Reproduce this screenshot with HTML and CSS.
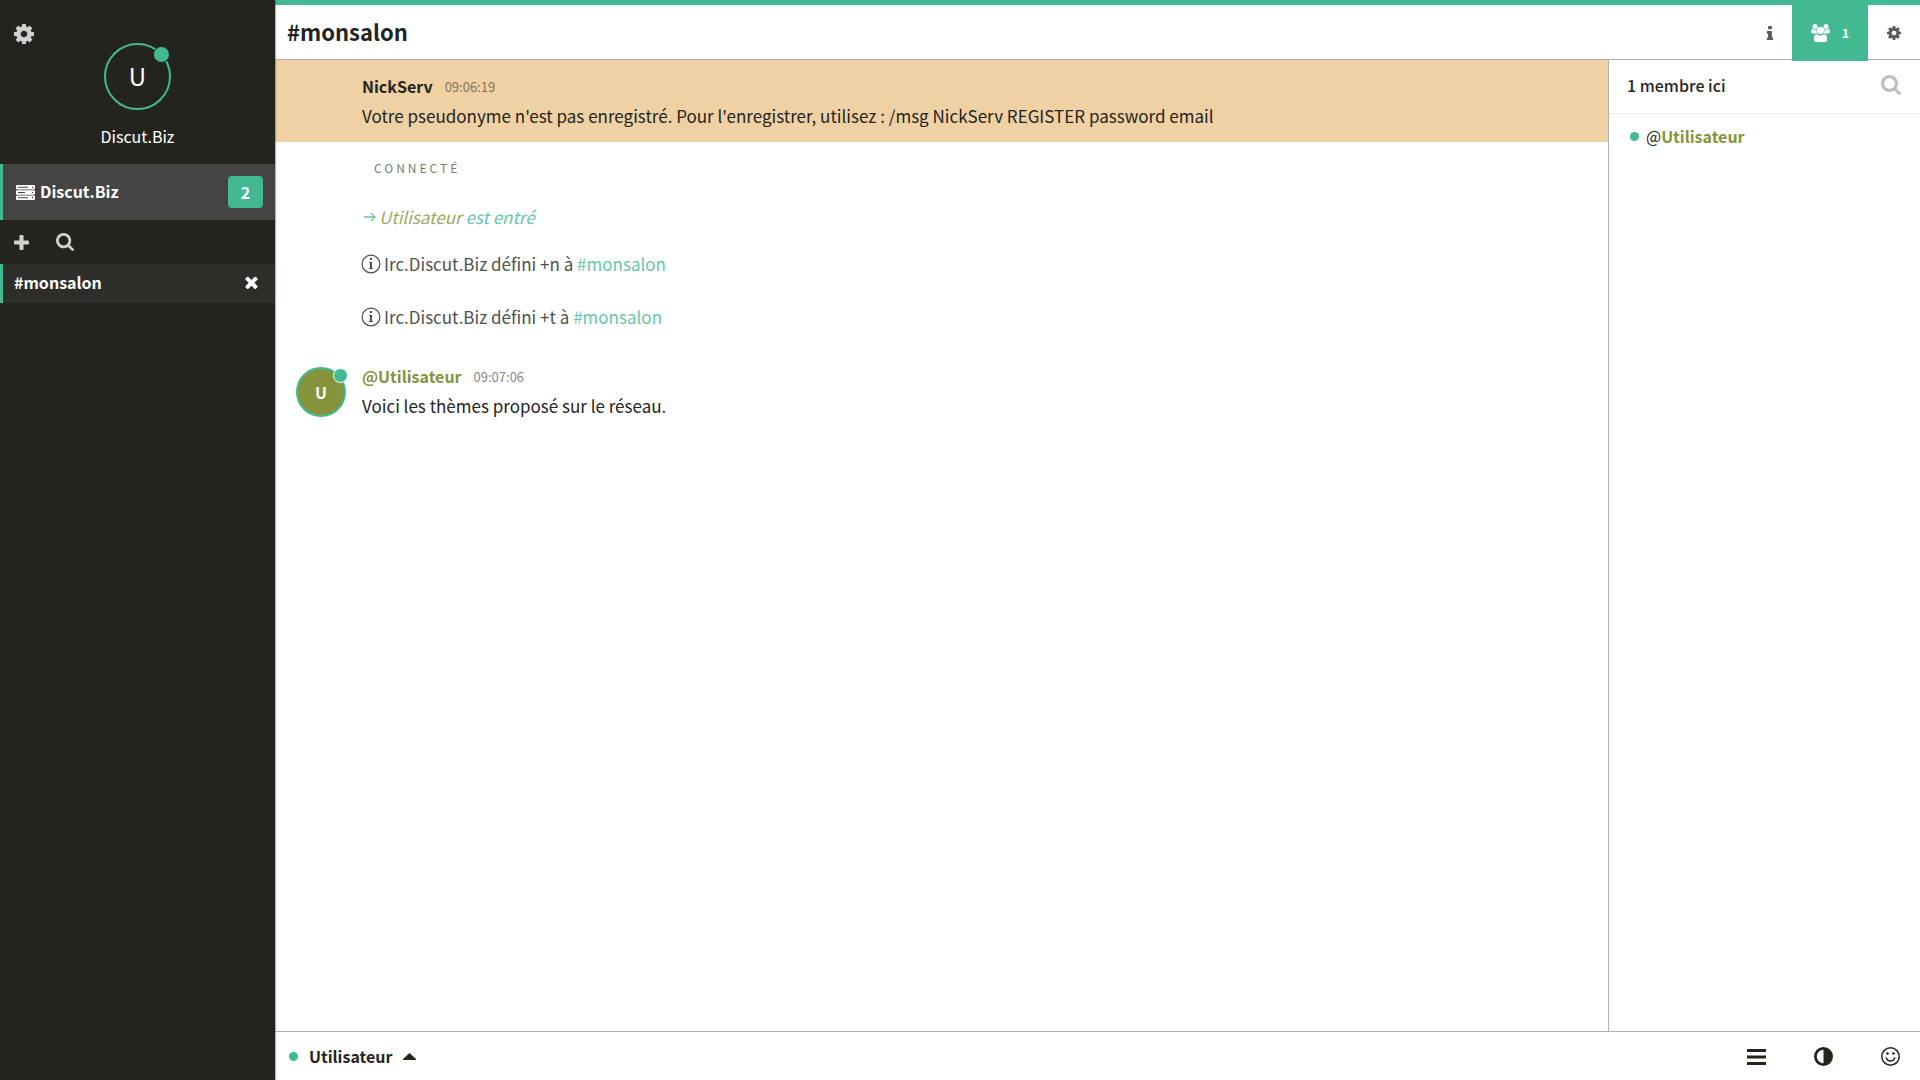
FILE: index.html
```html
<!DOCTYPE html>
<html lang="fr">
<head>
    <meta charset="UTF-8">
    <meta name="viewport" content="width=device-width, initial-scale=1.0">
    <title>#monsalon - Discut.Biz</title>
    <link rel="stylesheet" href="styles.css">
</head>
<body>
    <!-- Icônes -->
    <svg class="sprite" aria-hidden="true">
        <symbol id="cog" viewBox="128 128 1536 1536"><path d="M1152 896q0-106-75-181t-181-75-181 75-75 181 75 181 181 75 181-75 75-181zm512-109v222q0 12-8 23t-20 13l-185 28q-19 54-39 91 35 50 107 138 10 12 10 25t-9 23q-27 37-99 108t-94 71q-12 0-26-9l-138-108q-44 23-91 38-16 136-29 186-7 28-36 28h-222q-14 0-24.500-8.500t-11.500-21.500l-28-184q-49-16-90-37l-141 107q-10 9-25 9-14 0-25-11-126-114-165-168-7-10-7-23 0-12 8-23 15-21 51-66.500t54-70.500q-27-50-41-99l-183-27q-13-2-21-12.500t-8-23.500v-222q0-12 8-23t19-13l186-28q14-46 39-92-40-57-107-138-10-12-10-24 0-10 9-23 26-36 98.500-107.500t94.500-71.500q13 0 26 10l138 107q44-23 91-38 16-136 29-186 7-28 36-28h222q14 0 24.500 8.500t11.500 21.500l28 184q49 16 90 37l142-107q9-9 24-9 13 0 25 10 129 119 165 170 7 8 7 22 0 12-8 23-15 21-51 66.500t-54 70.500q26 50 41 98l183 28q13 2 21 12.500t8 23.500z"/></symbol>
        <symbol id="plus" viewBox="192 128 1408 1408"><path d="M1600 736v192q0 40-28 68t-68 28h-416v416q0 40-28 68t-68 28h-192q-40 0-68-28t-28-68v-416h-416q-40 0-68-28t-28-68v-192q0-40 28-68t68-28h416v-416q0-40 28-68t68-28h192q40 0 68 28t28 68v416h416q40 0 68 28t28 68z"/></symbol>
        <symbol id="search" viewBox="64 128 1664 1664"><path d="M1216 832q0-185-131.500-316.500t-316.500-131.500-316.500 131.500-131.500 316.500 131.500 316.500 316.500 131.500 316.500-131.500 131.500-316.500zm512 832q0 52-38 90t-90 38q-54 0-90-38l-343-342q-179 124-399 124-143 0-273.500-55.500t-225-150-150-225-55.500-273.500 55.500-273.500 150-225 225-150 273.500-55.500 273.500 55.500 225 150 150 225 55.500 273.500q0 220-124 399l343 343q37 37 37 90z"/></symbol>
        <symbol id="times" viewBox="302 302 1188 1252"><path d="M1490 1322q0 40-28 68l-136 136q-28 28-68 28t-68-28l-294-294-294 294q-28 28-68 28t-68-28l-136-136q-28-28-28-68t28-68l294-294-294-294q-28-28-28-68t28-68l136-136q28-28 68-28t68 28l294 294 294-294q28-28 68-28t68 28l136 136q28 28 28 68t-28 68l-294 294 294 294q28 28 28 68z"/></symbol>
        <symbol id="info" viewBox="192 128 1408 1408"><path d="M1216 1344v128q0 26-19 45t-45 19h-512q-26 0-45-19t-19-45v-128q0-26 19-45t45-19h64v-384h-64q-26 0-45-19t-19-45v-128q0-26 19-45t45-19h384q26 0 45 19t19 45v576h64q26 0 45 19t19 45zm-128-1152v192q0 26-19 45t-45 19h-256q-26 0-45-19t-19-45v-192q0-26 19-45t45-19h256q26 0 45 19t19 45z"/></symbol>
        <symbol id="server" viewBox="0 0 19 15"><path fill-rule="evenodd" d="M1 0h17q1 0 1 1v2.500q0 1-1 1H1q-1 0-1-1V1q0-1 1-1zM1 5.200h17q1 0 1 1v2.500q0 1-1 1H1q-1 0-1-1V6.200q0-1 1-1zM1 10.400h17q1 0 1 1v2.600q0 1-1 1H1q-1 0-1-1v-2.600q0-1 1-1zM2 1.800v1h10v-1zM2 7v1h7V7zM2 12.200v1h10v-1zM16 1.700v1.200h1.200V1.700zM16 6.900v1.200h1.200V6.900zM16 12.100v1.200h1.200v-1.200z"/></symbol>
        <symbol id="users" viewBox="0 0 19 18"><circle cx="4" cy="2.500" r="2.500"/><circle cx="15" cy="2.500" r="2.500"/><path d="M5.700 9.500H2Q0 9.500 0 7.800 0 5 1.400 5q1.200.8 2.800.8.800 0 1.400-.2-.5 2.200.9 3.900zM13.300 9.500H17q2 0 2-1.700Q19 5 17.600 5q-1.200.8-2.800.8-.8 0-1.400-.2.500 2.200-.9 3.900z"/><circle cx="9.500" cy="6.400" r="3.600"/><path d="M6 10.300q1.500 1.200 3.500 1.200t3.500-1.200q3.200 0 3.200 5 0 2.700-2.600 2.700H5.400q-2.600 0-2.600-2.700 0-5 3.200-5z"/></symbol>
        <symbol id="bars" viewBox="0 0 19 17"><path d="M0 1h19v3H0zM0 7.500h19v3H0zM0 14h19v3H0z"/></symbol>
        <symbol id="adjust" viewBox="0 0 19 19"><path fill-rule="evenodd" d="M9.500 0a9.500 9.500 0 1 1 0 19 9.500 9.500 0 0 1 0-19zm0 2.800a6.700 6.700 0 0 0 0 13.400z"/></symbol>
        <symbol id="smile" viewBox="0 0 19 19"><circle cx="9.500" cy="9.500" r="8.700" fill="none" stroke="currentColor" stroke-width="1.500"/><circle cx="6.500" cy="6.500" r="1.300"/><circle cx="12.500" cy="6.500" r="1.300"/><path d="M5.300 11q1.200 3 4.200 3t4.200-3" fill="none" stroke="currentColor" stroke-width="1.500" stroke-linecap="round"/></symbol>
        <symbol id="circle-info" viewBox="0 0 20 20"><circle cx="10" cy="10" r="8.900" fill="none" stroke="currentColor" stroke-width="1.200"/><path d="M9 4h2v2H9zM8 8h3v6h1v1H8v-1h1V9H8z"/></symbol>
        <symbol id="arrow" viewBox="0 0 12 10"><path d="M0 5h11M7 1l4 4-4 4" fill="none" stroke="currentColor" stroke-width="1.300"/></symbol>
        <symbol id="caret" viewBox="0 0 13 7"><path d="M6.500 0L13 6v1H0V6z"/></symbol>
    </svg>

    <div class="app">
        <aside class="sidebar">
            <header class="account">
                <button class="icon-btn account-settings" aria-label="Paramètres"><svg class="icon-20"><use href="#cog"/></svg></button>
                <div class="avatar avatar-large">U<span class="avatar-status"></span></div>
                <span class="account-name">Discut.Biz</span>
            </header>
            <a href="#" class="network">
                <svg class="icon-server"><use href="#server"/></svg>
                <span class="network-name">Discut.Biz</span>
                <span class="badge">2</span>
            </a>
            <div class="network-tools">
                <button class="icon-btn" aria-label="Ajouter un salon"><svg class="icon-15"><use href="#plus"/></svg></button>
                <button class="icon-btn" aria-label="Rechercher un salon"><svg class="icon-18"><use href="#search"/></svg></button>
            </div>
            <div class="channel">
                <a href="#" class="channel-name">#monsalon</a>
                <button class="icon-btn" aria-label="Fermer"><svg class="icon-13"><use href="#times"/></svg></button>
            </div>
        </aside>

        <main class="main">
            <header class="topbar">
                <h1>#monsalon</h1>
                <nav class="topbar-tools">
                    <button class="tool" aria-label="Informations"><svg class="icon-14"><use href="#info"/></svg></button>
                    <button class="tool tool-active" aria-label="Membres"><svg class="icon-users"><use href="#users"/></svg>1</button>
                    <button class="tool" aria-label="Réglages du salon"><svg class="icon-14"><use href="#cog"/></svg></button>
                </nav>
            </header>

            <div class="content">
                <section class="messages">
                    <article class="message message-notice">
                        <div class="message-body">
                            <div class="message-head"><b class="nick">NickServ</b><time>09:06:19</time></div>
                            <p class="message-text">Votre pseudonyme n'est pas enregistré. Pour l'enregistrer, utilisez : /msg NickServ REGISTER password email</p>
                        </div>
                    </article>
                    <p class="connected">Connecté</p>
                    <p class="event event-join"><svg class="icon-arrow"><use href="#arrow"/></svg><span><a href="#" class="user">Utilisateur</a> est entré</span></p>
                    <p class="event"><svg class="icon-20"><use href="#circle-info"/></svg><span>Irc.Discut.Biz défini +n à <a href="#">#monsalon</a></span></p>
                    <p class="event"><svg class="icon-20"><use href="#circle-info"/></svg><span>Irc.Discut.Biz défini +t à <a href="#">#monsalon</a></span></p>
                    <article class="message">
                        <div class="avatar avatar-small">U<span class="avatar-status"></span></div>
                        <div class="message-body">
                            <div class="message-head"><a href="#" class="nick user">@Utilisateur</a><time>09:07:06</time></div>
                            <p class="message-text">Voici les thèmes proposé sur le réseau.</p>
                        </div>
                    </article>
                </section>

                <aside class="members">
                    <header class="members-head">
                        <span>1 membre ici</span>
                        <button class="icon-btn" aria-label="Rechercher un membre"><svg class="icon-20"><use href="#search"/></svg></button>
                    </header>
                    <ul class="members-list">
                        <li><span class="dot"></span><span>@<a href="#" class="user">Utilisateur</a></span></li>
                    </ul>
                </aside>
            </div>

            <footer class="controls">
                <button class="own-nick"><span class="dot"></span>Utilisateur<svg class="icon-caret"><use href="#caret"/></svg></button>
                <div class="controls-tools">
                    <button class="icon-btn" aria-label="Menu"><svg class="icon-bars"><use href="#bars"/></svg></button>
                    <button class="icon-btn" aria-label="Thème"><svg class="icon-19"><use href="#adjust"/></svg></button>
                    <button class="icon-btn" aria-label="Émoticônes"><svg class="icon-19"><use href="#smile"/></svg></button>
                </div>
            </footer>
        </main>
    </div>
</body>
</html>
```

FILE: styles.css
```css
* {
    box-sizing: border-box;
}

body {
    margin: 0;
    color: #24241f;
    background: #fff;
    font-family: "Noto Sans CJK SC", "Open Sans", sans-serif;
    font-size: 16px;
    line-height: 30px;
}

p, h1, ul {
    margin: 0;
    padding: 0;
}

a {
    color: inherit;
    text-decoration: none;
}

button {
    padding: 0;
    border: 0;
    background: none;
    color: inherit;
    font: inherit;
    cursor: pointer;
}

svg {
    display: block;
    flex: none;
    fill: currentColor;
}

.sprite {
    position: absolute;
    width: 0;
    height: 0;
}

.icon-13 { width: 13px; height: 13px; }
.icon-14 { width: 14px; height: 14px; }
.icon-15 { width: 15px; height: 15px; }
.icon-18 { width: 18px; height: 18px; }
.icon-19 { width: 19px; height: 19px; }
.icon-20 { width: 20px; height: 20px; }
.icon-server { width: 19px; height: 15px; }
.icon-users { width: 19px; height: 18px; }
.icon-bars { width: 19px; height: 17px; }
.icon-arrow { width: 12px; height: 10px; }
.icon-caret { width: 13px; height: 7px; }

.app {
    display: flex;
    height: 100vh;
}

/* Barre latérale */
.sidebar {
    position: relative;
    z-index: 1;
    flex: none;
    width: 275px;
    background: #24241f;
    color: #fff;
    box-shadow: 0 0 2px #24241f;
}

.account {
    position: relative;
    display: flex;
    flex-direction: column;
    align-items: center;
    gap: 11px;
    height: 164px;
    padding-top: 43px;
}

.account-settings {
    position: absolute;
    top: 24px;
    left: 14px;
}

.sidebar .icon-btn {
    color: #d0d0ce;
}

.avatar {
    position: relative;
    display: flex;
    flex: none;
    align-items: center;
    justify-content: center;
    border: 2px solid #42b992;
    border-radius: 50%;
}

.avatar-large {
    width: 67px;
    height: 67px;
    padding-bottom: 2px;
    font-size: 24px;
}

.avatar-small {
    width: 50px;
    height: 50px;
    background: #85943b;
    color: #fff;
    font-weight: bold;
}

.avatar-status {
    position: absolute;
    top: 1px;
    right: -1px;
    width: 17px;
    height: 17px;
    border: 1px solid #24241f;
    border-radius: 50%;
    background: #42b992;
}

.avatar-small .avatar-status {
    top: -1px;
    right: -4px;
    width: 15px;
    height: 15px;
    border-color: #fff;
}

.network {
    display: flex;
    align-items: center;
    gap: 5px;
    height: 56px;
    padding: 0 12px 0 13px;
    border-left: 3px solid #42b992;
    background: #444;
    font-weight: bold;
}

.network-name {
    flex: 1;
    padding-bottom: 2px;
}

.badge {
    width: 35px;
    border-radius: 4px;
    background: #42b992;
    line-height: 32px;
    text-align: center;
}

.network-tools {
    display: flex;
    align-items: center;
    gap: 27px;
    height: 44px;
    padding: 0 14px;
}

.channel {
    display: flex;
    align-items: center;
    justify-content: space-between;
    height: 39px;
    padding: 0 17px 2px 11px;
    border-left: 3px solid #42b992;
    background: #2d2d29;
    font-weight: bold;
}

.channel-name {
    padding-bottom: 2px;
}

.channel .icon-btn {
    color: #fff;
}

/* Zone principale */
.main {
    display: flex;
    flex: 1;
    flex-direction: column;
    min-width: 0;
    border-top: 5px solid #42b992;
}

.topbar {
    display: flex;
    align-items: center;
    justify-content: space-between;
    height: 55px;
    padding-left: 12px;
    border-bottom: 1px solid #b0b0b0;
}

.topbar h1 {
    padding-bottom: 2px;
    font-size: 22px;
}

.topbar-tools {
    display: flex;
    align-self: flex-start;
}

.tool {
    display: flex;
    align-items: center;
    justify-content: center;
    gap: 12px;
    width: 52px;
    height: 56px;
    color: #5c5c58;
    font-size: 12px;
}

.tool:first-child {
    width: 44px;
}

.tool-active {
    position: relative;
    width: 76px;
    background: #42b992;
    color: #fff;
    font-weight: bold;
}

.content {
    display: flex;
    flex: 1;
    min-height: 0;
}

.messages {
    flex: 1;
    overflow: auto;
}

.message {
    display: flex;
    gap: 16px;
    padding: 17px 21px 10px;
}

.message-notice {
    padding: 11px 21px 11px 87px;
    background: #efd1a3;
}

.message-head {
    display: flex;
    align-items: center;
    gap: 12px;
}

.message-text {
    font-size: 17px;
}

.nick {
    font-weight: bold;
}

.user {
    color: #85943b;
}

time {
    padding-top: 2px;
    color: #24241f;
    font-size: 13px;
    line-height: 28px;
    opacity: 0.55;
}

.avatar-small {
    margin-top: 6px;
}

.connected {
    padding: 11px 99px;
    color: #7b7b78;
    font-size: 12px;
    letter-spacing: 3px;
    text-transform: uppercase;
}

.event {
    display: flex;
    align-items: center;
    gap: 3px;
    padding: 11px 86px 12px;
    font-size: 17px;
    opacity: 0.8;
}

.event a {
    color: #42b992;
}

.event-join {
    padding: 8px 89px 6px;
    color: #42b992;
    font-style: italic;
}

.event .user {
    color: #85943b;
}

/* Liste des membres */
.members {
    flex: none;
    width: 312px;
    border-left: 1px solid #b0b0b0;
}

.members-head {
    display: flex;
    align-items: center;
    justify-content: space-between;
    height: 54px;
    padding: 0 19px 4px 18px;
    border-bottom: 1px solid #ececec;
    font-weight: 500;
}

.members-head .icon-btn {
    color: #bdbdbb;
}

.members-list {
    padding: 7px 21px;
    list-style: none;
}

.members-list li {
    display: flex;
    align-items: center;
    gap: 7px;
}

.members-list .user {
    font-weight: bold;
}

.dot {
    width: 9px;
    height: 9px;
    border-radius: 50%;
    background: #42b992;
}

/* Pied de page */
.controls {
    display: flex;
    align-items: center;
    justify-content: space-between;
    height: 49px;
    padding: 0 20px 0 14px;
    border-top: 1px solid #b0b0b0;
}

.own-nick {
    display: flex;
    align-items: center;
    gap: 11px;
    font-weight: bold;
}

.controls-tools {
    display: flex;
    align-items: center;
    gap: 48px;
}
```
